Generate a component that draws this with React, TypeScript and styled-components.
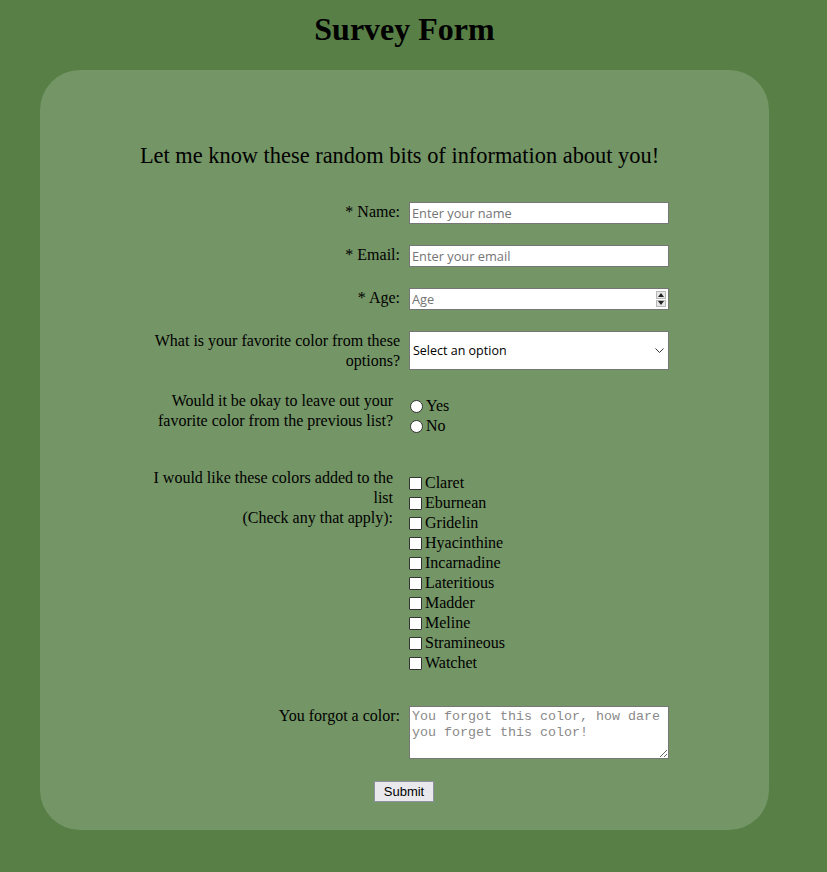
import React from "react";
import styled, { createGlobalStyle } from "styled-components";

const Global = createGlobalStyle`
  html, body { margin: 0; padding: 0; }
  body {
    background: #577f46;
    font-family: "Liberation Serif", "Times New Roman", serif;
    color: #000;
    font-size: 16px;
  }
`;

const Page = styled.div`
  padding: 12px 0 43px;
`;

const Title = styled.h1`
  margin: 0 0 23px;
  text-align: center;
  font-size: 32px;
  font-weight: bold;
  line-height: 35px;
  padding-right: 18px;
`;

const Panel = styled.main`
  width: 729px;
  margin-left: 40px;
  box-sizing: border-box;
  background: #749566;
  border-radius: 40px;
  padding: 74px 0 28px;
`;

const Subtitle = styled.p`
  margin: 0 0 34px;
  text-align: center;
  font-size: 22.4px;
  line-height: 24px;
  padding-right: 10px;
`;

const Form = styled.form`
  display: grid;
  grid-template-columns: 255px 260px;
  column-gap: 9px;
  margin-left: 105px;
  width: 524px;
`;

const Label = styled.label<{ $pad?: number; $gapAfter?: number }>`
  text-align: right;
  line-height: 20px;
  padding-top: ${(p) => p.$pad ?? 0}px;
  margin-bottom: ${(p) => p.$gapAfter ?? 23}px;
`;

const GroupLabel = styled.div<{ $gapAfter?: number }>`
  text-align: right;
  line-height: 20px;
  padding-left: 8px;
  padding-right: 7px;
  margin-bottom: ${(p) => p.$gapAfter ?? 21}px;
`;

const TextInput = styled.input`
  box-sizing: border-box;
  width: 260px;
  height: 22px;
  margin: 0;
  padding: 1px 2px;
  border: 1px solid #767676;
  background: #fff;
  font-family: "Open Sans", "DejaVu Sans", sans-serif;
  font-size: 12.8px;
  &::placeholder { color: #757575; }
  &::-webkit-inner-spin-button,
  &::-webkit-outer-spin-button { -webkit-appearance: none; margin: 0; }
  -moz-appearance: textfield;
`;

const InputWrap = styled.div`
  position: relative;
  width: 260px;
  height: 22px;
`;

const Spinner = styled.div`
  position: absolute;
  right: 3px;
  top: 3px;
  width: 10px;
  height: 16px;
  display: flex;
  flex-direction: column;
  gap: 1px;
`;

const SpinHalf = styled.div`
  flex: 1;
  background: #e6e6e6;
  border: 1px solid #b8b8b8;
  display: flex;
  align-items: center;
  justify-content: center;
`;

const Select = styled.select`
  box-sizing: border-box;
  width: 260px;
  height: 39px;
  margin: 0;
  padding: 0 0 0 3px;
  border: 1px solid #767676;
  border-radius: 0;
  background: #fff;
  font-family: "Open Sans", "DejaVu Sans", sans-serif;
  font-size: 12.5px;
  color: #000;
  appearance: none;
  -webkit-appearance: none;
`;

const SelectWrap = styled.div`
  position: relative;
  width: 260px;
  height: 39px;
`;

const Chevron = styled.svg`
  position: absolute;
  right: 5px;
  top: 17px;
  pointer-events: none;
`;

const OptionList = styled.div<{ $top: number; $gapAfter?: number }>`
  display: flex;
  flex-direction: column;
  padding-top: ${(p) => p.$top}px;
  margin-bottom: ${(p) => p.$gapAfter ?? 21}px;
`;

const Option = styled.label`
  display: flex;
  align-items: center;
  height: 20px;
  line-height: 20px;
`;

const Radio = styled.input`
  appearance: none;
  -webkit-appearance: none;
  box-sizing: border-box;
  margin: 0 3px 0 1px;
  width: 13px;
  height: 13px;
  border: 1px solid #333;
  border-radius: 50%;
  background: #fff;
  &:checked { background: radial-gradient(circle, #000 0 3px, #fff 3.5px); }
`;

const Check = styled.input`
  appearance: none;
  -webkit-appearance: none;
  box-sizing: border-box;
  margin: 0 3px 0 0;
  width: 13px;
  height: 13px;
  border: 1px solid #333;
  border-radius: 1px;
  background: #fff;
  &:checked { background: #0075ff; }
`;

const TextArea = styled.textarea`
  box-sizing: border-box;
  width: 260px;
  height: 53px;
  margin: 0;
  padding: 2px 2px;
  border: 1px solid #767676;
  background: #fff;
  font-family: "Liberation Mono", "Courier New", monospace;
  font-size: 13.33px;
  line-height: 16px;
  resize: both;
  &::placeholder { color: #8a8a8a; }
`;

const SubmitRow = styled.div`
  grid-column: 1 / -1;
  display: flex;
  justify-content: center;
  padding-right: 6px;
`;

const Button = styled.button`
  box-sizing: border-box;
  height: 21px;
  width: 60px;
  padding: 0;
  margin: 0;
  background: #e9e9ed;
  border: 1px solid #8f8f9d;
  border-radius: 0;
  font-family: "Liberation Sans", Arial, sans-serif;
  font-size: 13px;
  color: #000;
`;

const colors = [
  "Claret",
  "Eburnean",
  "Gridelin",
  "Hyacinthine",
  "Incarnadine",
  "Lateritious",
  "Madder",
  "Meline",
  "Stramineous",
  "Watchet",
];

export default function App() {
  return (
    <>
      <Global />
      <Page>
        <Title>Survey Form</Title>
        <Panel>
          <Subtitle>Let me know these random bits of information about you!</Subtitle>
          <Form onSubmit={(e) => e.preventDefault()}>
            <Label htmlFor="name">* Name:</Label>
            <TextInput id="name" type="text" placeholder="Enter your name" />

            <Label htmlFor="email">* Email:</Label>
            <TextInput id="email" type="email" placeholder="Enter your email" />

            <Label htmlFor="age">* Age:</Label>
            <InputWrap>
              <TextInput id="age" type="number" placeholder="Age" />
              <Spinner>
                <SpinHalf>
                  <svg width="6" height="4" viewBox="0 0 6 4"><path d="M0 4L3 0L6 4Z" fill="#222" /></svg>
                </SpinHalf>
                <SpinHalf>
                  <svg width="6" height="4" viewBox="0 0 6 4"><path d="M0 0L3 4L6 0Z" fill="#222" /></svg>
                </SpinHalf>
              </Spinner>
            </InputWrap>

            <Label htmlFor="fav" $gapAfter={20}>
              What is your favorite color from these options?
            </Label>
            <SelectWrap>
              <Select id="fav" defaultValue="">
                <option value="" disabled>Select an option</option>
                <option>Red</option>
                <option>Green</option>
                <option>Blue</option>
              </Select>
              <Chevron width="9" height="5" viewBox="0 0 9 5">
                <path d="M0.5 0.5L4.5 4.5L8.5 0.5" fill="none" stroke="#333" strokeWidth="1" />
              </Chevron>
            </SelectWrap>

            <GroupLabel $gapAfter={37}>
              Would it be okay to leave out your favorite color from the previous list?
            </GroupLabel>
            <OptionList $top={5} $gapAfter={32}>
              <Option><Radio type="radio" name="leave" value="yes" />Yes</Option>
              <Option><Radio type="radio" name="leave" value="no" />No</Option>
            </OptionList>

            <GroupLabel $gapAfter={33}>
              I would like these colors added to the list
              <br />
              (Check any that apply):
            </GroupLabel>
            <OptionList $top={5} $gapAfter={33}>
              {colors.map((c) => (
                <Option key={c}><Check type="checkbox" value={c} />{c}</Option>
              ))}
            </OptionList>

            <Label htmlFor="forgot" $gapAfter={55}>You forgot a color:</Label>
            <TextArea id="forgot" placeholder="You forgot this color, how dare you forget this color!" />

            <SubmitRow>
              <Button type="submit">Submit</Button>
            </SubmitRow>
          </Form>
        </Panel>
      </Page>
    </>
  );
}
